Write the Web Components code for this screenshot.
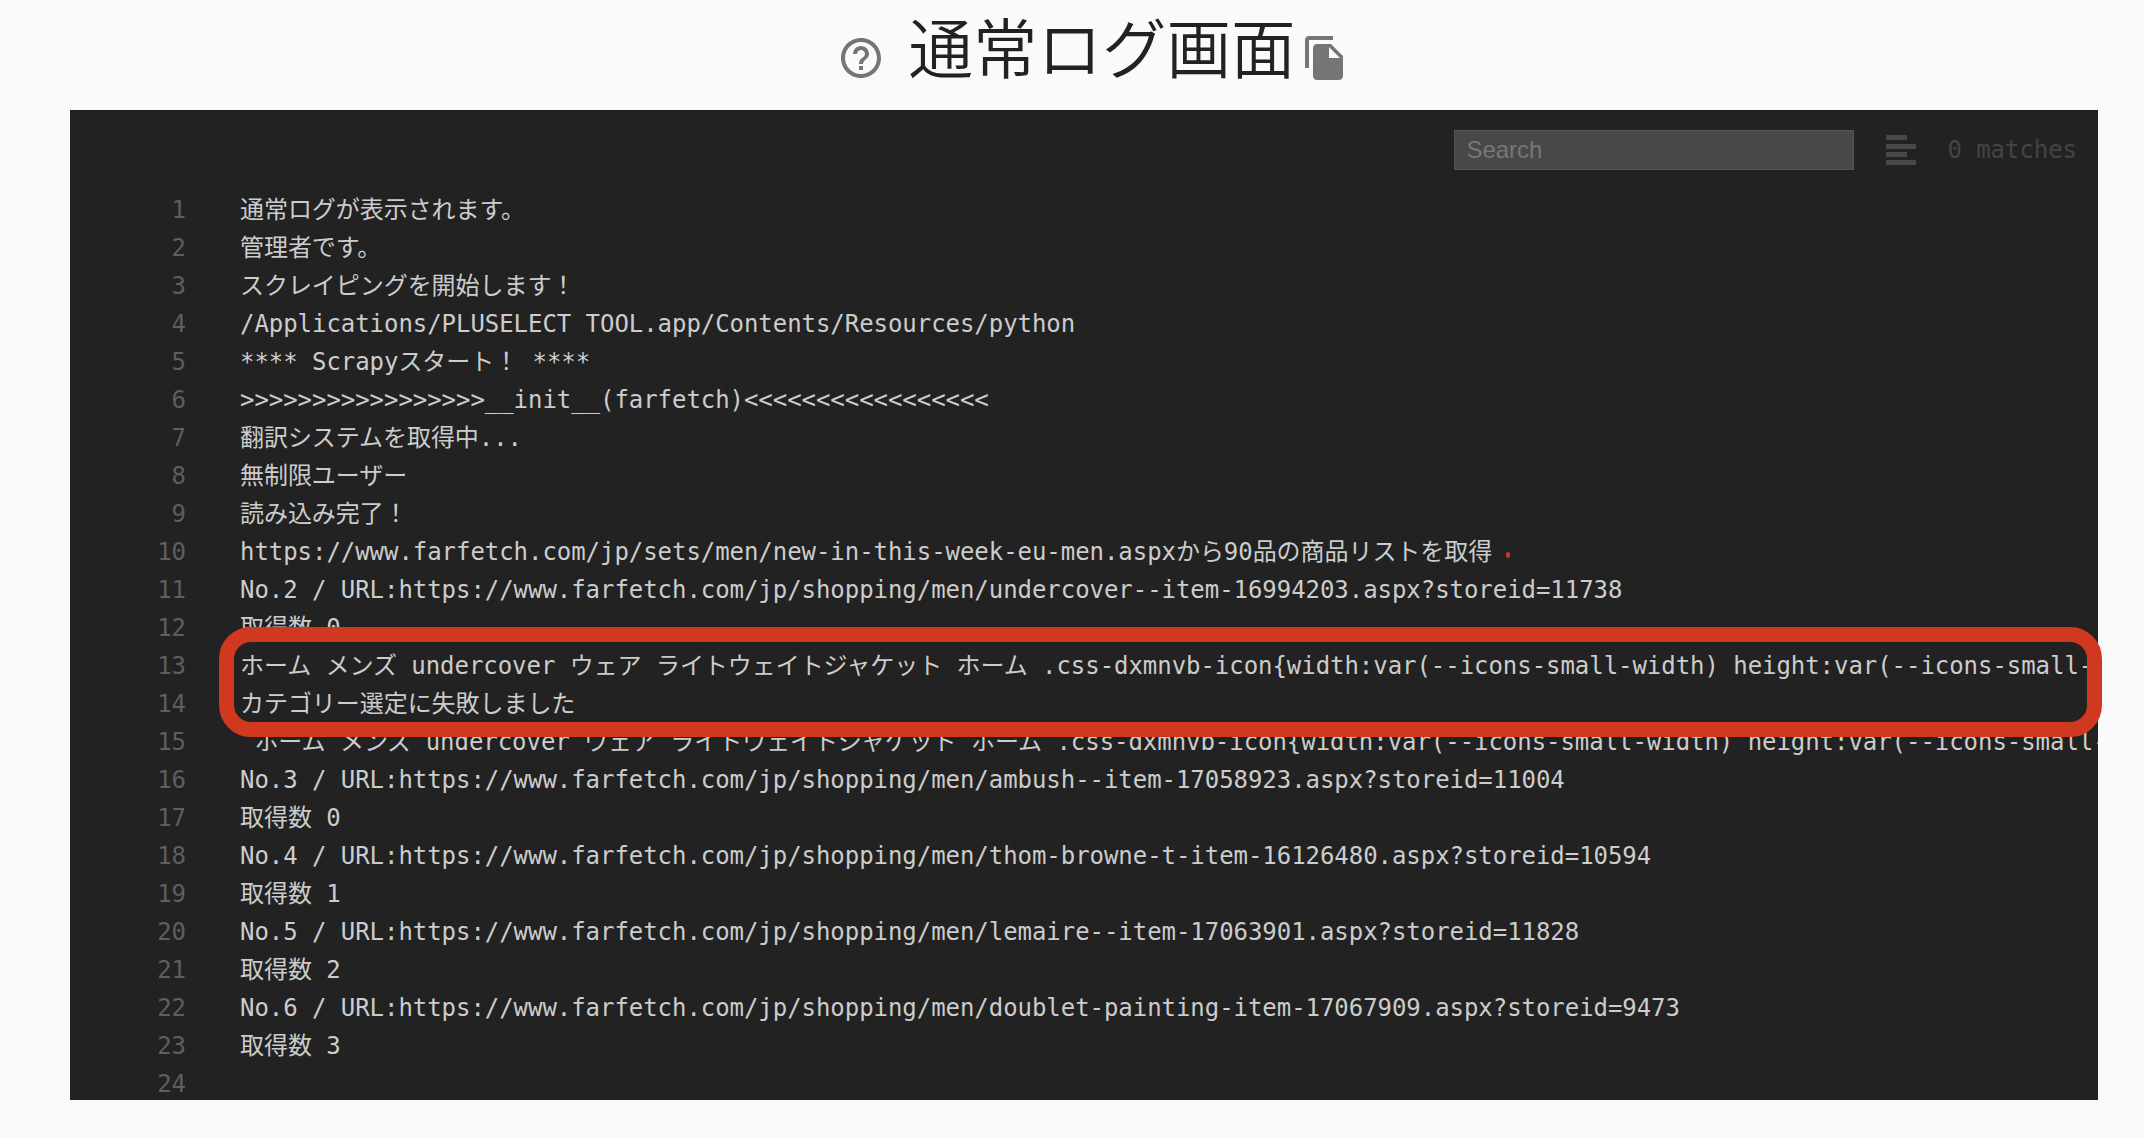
<!DOCTYPE html>
<html lang="ja">
<head>
<meta charset="utf-8">
<title>通常ログ画面</title>
<style>
  html, body {
    margin: 0;
    height: 100%;
    background: #fafafa;
  }
</style>
</head>
<body>
<log-page>
  <page-title slot="title">通常ログ画面</page-title>
  <log-viewer slot="viewer"></log-viewer>
</log-page>

<script>
const LOG_LINES = [
  '通常ログが表示されます。',
  '管理者です。',
  'スクレイピングを開始します！',
  '/Applications/PLUSELECT TOOL.app/Contents/Resources/python',
  '**** Scrapyスタート！ ****',
  '>>>>>>>>>>>>>>>>>__init__(farfetch)<<<<<<<<<<<<<<<<<',
  '翻訳システムを取得中...',
  '無制限ユーザー',
  '読み込み完了！',
  'https://www.farfetch.com/jp/sets/men/new-in-this-week-eu-men.aspxから90品の商品リストを取得 ',
  'No.2 / URL:https://www.farfetch.com/jp/shopping/men/undercover--item-16994203.aspx?storeid=11738',
  '取得数 0',
  'ホーム メンズ undercover ウェア ライトウェイトジャケット ホーム .css-dxmnvb-icon{width:var(--icons-small-width) height:var(--icons-small-height)}',
  'カテゴリー選定に失敗しました',
  ' ホーム メンズ undercover ウェア ライトウェイトジャケット ホーム .css-dxmnvb-icon{width:var(--icons-small-width) height:var(--icons-small-height)}',
  'No.3 / URL:https://www.farfetch.com/jp/shopping/men/ambush--item-17058923.aspx?storeid=11004',
  '取得数 0',
  'No.4 / URL:https://www.farfetch.com/jp/shopping/men/thom-browne-t-item-16126480.aspx?storeid=10594',
  '取得数 1',
  'No.5 / URL:https://www.farfetch.com/jp/shopping/men/lemaire--item-17063901.aspx?storeid=11828',
  '取得数 2',
  'No.6 / URL:https://www.farfetch.com/jp/shopping/men/doublet-painting-item-17067909.aspx?storeid=9473',
  '取得数 3',
  ''
];

const pageTemplate = document.createElement('template');
pageTemplate.innerHTML = `
<style>
  :host {
    display: flex;
    flex-direction: column;
    height: 100vh;
    padding: 0 46px 0 70px;
    box-sizing: border-box;
  }
</style>
<slot name="title"></slot>
<slot name="viewer"></slot>
`;

class LogPage extends HTMLElement {
  constructor() {
    super();
    this.attachShadow({ mode: 'open' });
    this.shadowRoot.appendChild(pageTemplate.content.cloneNode(true));
  }
}

const titleTemplate = document.createElement('template');
titleTemplate.innerHTML = `
<style>
  :host {
    display: flex;
    justify-content: center;
    align-items: flex-start;
    height: 110px;
    color: #222;
    font: 350 64.5px/90px "Noto Sans CJK JP", sans-serif;
    padding-left: 18px;
  }
  svg {
    width: 48px;
    height: 48px;
    fill: #757575;
    margin-top: 34px;
    flex: none;
  }
  .help {
    margin-right: 23px;
  }
  .copy {
    margin-left: 5px;
  }
</style>
<svg class="help" viewBox="0 0 24 24"><path d="M11 18h2v-2h-2v2zm1-16C6.48 2 2 6.48 2 12s4.48 10 10 10 10-4.48 10-10S17.52 2 12 2zm0 18c-4.41 0-8-3.59-8-8s3.59-8 8-8 8 3.59 8 8-3.59 8-8 8zm0-14c-2.21 0-4 1.79-4 4h2c0-1.1.9-2 2-2s2 .9 2 2c0 2-3 1.75-3 5h2c0-2.25 3-2.5 3-5 0-2.21-1.79-4-4-4z"/></svg>
<span><slot></slot></span>
<svg class="copy" viewBox="0 0 24 24"><path d="M16 1H4c-1.1 0-2 .9-2 2v14h2V3h12V1zm-1 4l6 6v10c0 1.1-.9 2-2 2H7.99C6.89 23 6 22.1 6 21l.01-14c0-1.1.89-2 1.99-2h7zm-1 7h5.5L14 6.5V12z"/></svg>
`;

class PageTitle extends HTMLElement {
  constructor() {
    super();
    this.attachShadow({ mode: 'open' });
    this.shadowRoot.appendChild(titleTemplate.content.cloneNode(true));
  }
}

const toolbarTemplate = document.createElement('template');
toolbarTemplate.innerHTML = `
<style>
  :host {
    display: flex;
    justify-content: flex-end;
    align-items: center;
    height: 40px;
    padding: 20px 21px 21px 0;
    font: 24px/40px "DejaVu Sans Mono", monospace;
    letter-spacing: -0.05px;
    color: #444;
  }
  .search {
    width: 400px;
    height: 40px;
    box-sizing: border-box;
    padding-left: 11px;
    background: #484848;
    border: 1px solid #555;
    color: #777;
    font: 24px/38px "Liberation Sans", sans-serif;
    letter-spacing: 0;
  }
  svg {
    width: 30px;
    height: 30px;
    margin: 0 31px 0 32px;
    fill: #484848;
  }
</style>
<div class="search">Search</div>
<svg viewBox="0 0 30 30">
  <rect x="0" y="0" width="21" height="5"/>
  <rect x="0" y="9" width="30" height="5"/>
  <rect x="0" y="17" width="21" height="5"/>
  <rect x="0" y="25" width="30" height="5"/>
</svg>
<span>0 matches</span>
`;

class LogToolbar extends HTMLElement {
  constructor() {
    super();
    this.attachShadow({ mode: 'open' });
    this.shadowRoot.appendChild(toolbarTemplate.content.cloneNode(true));
  }
}

const lineTemplate = document.createElement('template');
lineTemplate.innerHTML = `
<style>
  :host {
    display: flex;
    height: 38px;
    white-space: pre;
    letter-spacing: -0.05px;
  }
  .num {
    flex: none;
    width: 116px;
    margin-right: 54px;
    text-align: right;
    color: #5e5e5e;
  }
  .text {
    color: #ccc;
  }
  .mark {
    display: inline-block;
    width: 4px;
    height: 6px;
    margin-left: -1px;
    border-radius: 50%;
    background: #d2391f;
    vertical-align: 2px;
  }
</style>
<span class="num"></span>
<span class="text"><slot></slot></span>
`;

class LogLine extends HTMLElement {
  constructor() {
    super();
    this.attachShadow({ mode: 'open' });
    this.shadowRoot.appendChild(lineTemplate.content.cloneNode(true));
  }

  connectedCallback() {
    this.shadowRoot.querySelector('.num').textContent = this.getAttribute('number');
    if (this.hasAttribute('marked')) {
      const mark = document.createElement('span');
      mark.className = 'mark';
      this.shadowRoot.querySelector('.text').appendChild(mark);
    }
  }
}

const viewerTemplate = document.createElement('template');
viewerTemplate.innerHTML = `
<style>
  :host {
    display: block;
    position: relative;
    height: 990px;
  }
  .panel {
    height: 100%;
    overflow: hidden;
    background: #222;
    font: 24px/38px "DejaVu Sans Mono", "Noto Sans CJK JP", monospace;
  }
  .lines {
    display: block;
  }
  /* hand drawn annotation, sits over the log and past the panel edge */
  .callout {
    position: absolute;
    left: 149px;
    top: 517px;
    width: 1883px;
    height: 110px;
    box-sizing: border-box;
    border: 15px solid #d0381f;
    border-radius: 32px;
  }
</style>
<div class="panel">
  <log-toolbar></log-toolbar>
  <div class="lines"></div>
</div>
<div class="callout"></div>
`;

class LogViewer extends HTMLElement {
  constructor() {
    super();
    this.attachShadow({ mode: 'open' });
    this.shadowRoot.appendChild(viewerTemplate.content.cloneNode(true));
  }

  connectedCallback() {
    const lines = this.shadowRoot.querySelector('.lines');
    LOG_LINES.forEach((text, i) => {
      const line = document.createElement('log-line');
      line.setAttribute('number', i + 1);
      if (i === 9) line.setAttribute('marked', '');
      line.textContent = text;
      lines.appendChild(line);
    });
  }
}

window.customElements.define('log-page', LogPage);
window.customElements.define('page-title', PageTitle);
window.customElements.define('log-toolbar', LogToolbar);
window.customElements.define('log-line', LogLine);
window.customElements.define('log-viewer', LogViewer);
</script>
</body>
</html>
